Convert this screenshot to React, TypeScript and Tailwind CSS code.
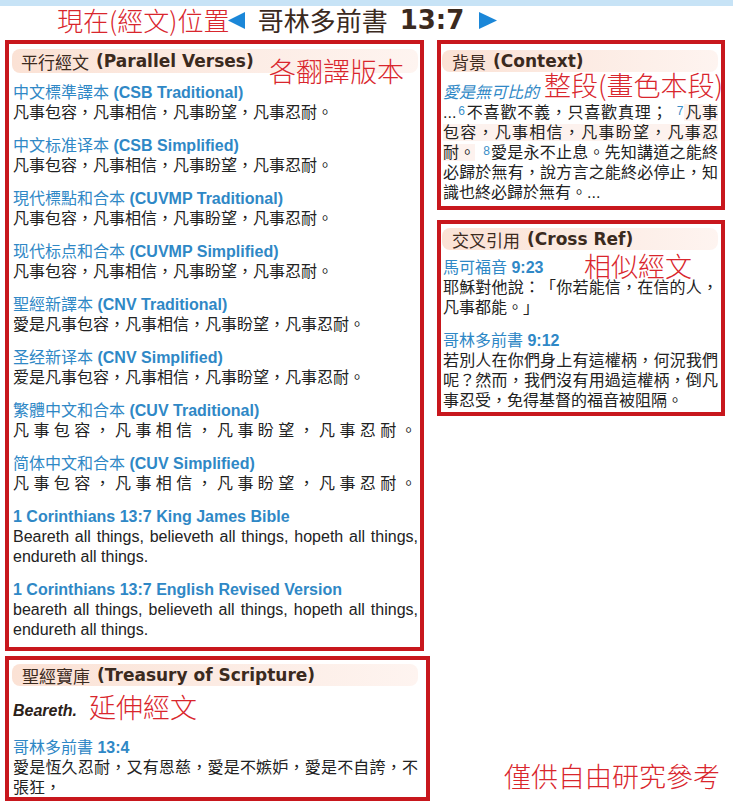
import React from "react";

const BLUE = "text-[#2f88c6]";

function SectionHeader({ zh, en, className }: { zh: string; en: string; className: string }) {
  return (
    <div
      className={`flex items-center rounded-lg bg-linear-to-r from-[#fbe2d5] via-[#fcebe3] to-[#fef4f0] text-[17px] leading-none text-[#3b2a1e] ${className}`}
    >
      <span className="font-['Noto_Sans_CJK_TC',sans-serif]">{zh}</span>
      <span className="ml-[7px] font-['DejaVu_Sans',sans-serif] font-bold">{en}</span>
    </div>
  );
}

function Sup({ n, className = "" }: { n: string; className?: string }) {
  return (
    <span className={`relative -top-[3px] text-[12px] leading-none text-[#3a8fc8] mr-[1px] ${className}`}>{n}</span>
  );
}

function Note({ text, className }: { text: string; className: string }) {
  return (
    <div
      className={`absolute whitespace-nowrap font-['Noto_Sans_CJK_TC',sans-serif] font-light leading-none text-[#d9262d] ${className}`}
    >
      {text}
    </div>
  );
}

const CN = "凡事包容，凡事相信，凡事盼望，凡事忍耐。";

const parallels: { zh?: string; en: string; text: string; spaced?: boolean }[] = [
  { zh: "中文標準譯本", en: "(CSB Traditional)", text: CN },
  { zh: "中文标准译本", en: "(CSB Simplified)", text: CN },
  { zh: "現代標點和合本", en: "(CUVMP Traditional)", text: CN },
  { zh: "现代标点和合本", en: "(CUVMP Simplified)", text: CN },
  { zh: "聖經新譯本", en: "(CNV Traditional)", text: "愛是凡事包容，凡事相信，凡事盼望，凡事忍耐。" },
  { zh: "圣经新译本", en: "(CNV Simplified)", text: "爱是凡事包容，凡事相信，凡事盼望，凡事忍耐。" },
  { zh: "繁體中文和合本", en: "(CUV Traditional)", text: CN, spaced: true },
  { zh: "简体中文和合本", en: "(CUV Simplified)", text: CN, spaced: true },
  {
    en: "1 Corinthians 13:7 King James Bible",
    text: "Beareth all things, believeth all things, hopeth all things, endureth all things.",
  },
  {
    en: "1 Corinthians 13:7 English Revised Version",
    text: "beareth all things, believeth all things, hopeth all things, endureth all things.",
  },
];

const crossRefs = [
  { zh: "馬可福音", ref: "9:23", text: "耶穌對他說：「你若能信，在信的人，凡事都能。」" },
  {
    zh: "哥林多前書",
    ref: "9:12",
    text: "若別人在你們身上有這權柄，何況我們呢？然而，我們沒有用過這權柄，倒凡事忍受，免得基督的福音被阻隔。",
  },
];

function RefTitle({ zh, en }: { zh?: string; en: string }) {
  return (
    <div className={`text-[16px] leading-[20px] whitespace-nowrap ${BLUE}`}>
      {zh ? <span className="font-normal">{zh} </span> : null}
      <span className="font-bold">{en}</span>
    </div>
  );
}

export default function App() {
  return (
    <div
      lang="zh-Hant"
      className="relative h-[806px] w-[733px] overflow-hidden bg-white font-['Liberation_Sans','Noto_Sans_CJK_TC',sans-serif] text-[#222] [text-spacing-trim:space-all]"
    >
      <div className="h-[6px] bg-[#c7e3f6]" />

      {/* Title row */}
      <div className="flex h-[28px] items-center justify-center pr-[8px]">
        <svg width="17" height="17" viewBox="0 0 17 17">
          <polygon points="17,0 17,17 0,8.5" fill="#1b87d8" />
        </svg>
        <span className="ml-[13px] font-['Noto_Sans_CJK_TC',sans-serif] text-[26px] leading-none text-[#3b2a1e]">
          哥林多前書
        </span>
        <span className="ml-[12px] font-['DejaVu_Sans',sans-serif] text-[26px] font-bold leading-none text-[#3b2a1e]">
          13:7
        </span>
        <svg className="ml-[15px]" width="18" height="17" viewBox="0 0 18 17">
          <polygon points="0,0 18,8.5 0,17" fill="#1b87d8" />
        </svg>
      </div>

      <div className="mt-[6px] flex pl-[5px]">
        {/* Left column */}
        <div className="flex w-[425px] flex-col">
          <div className="h-[611px] w-[419px] border-[4px] border-[#c8171d]">
            <SectionHeader zh="平行經文" en="(Parallel Verses)" className="ml-[3px] mr-[2px] mt-[5px] h-[24px] pl-[9px]" />
            <div className="mt-[10px] flex flex-col gap-[13px] pl-[4px] pr-[2px]">
              {parallels.map((p, i) => (
                <div key={i}>
                  <RefTitle zh={p.zh} en={p.en} />
                  <div
                    className={`text-justify text-[16px] leading-[20px] ${p.spaced ? "tracking-[4.4px] whitespace-nowrap" : ""}`}
                  >
                    {p.text}
                  </div>
                </div>
              ))}
            </div>
          </div>

          <div className="mt-[5px] h-[145px] w-[425px] border-[4px] border-[#c8171d]">
            <SectionHeader
              zh="聖經寶庫"
              en="(Treasury of Scripture)"
              className="ml-[3px] mr-[8px] mt-[4px] h-[22px] pl-[10px]"
            />
            <div className="mt-[15px] pl-[4px] text-[16px] font-bold italic leading-[20px] text-[#2b2118]">Beareth.</div>
            <div className="mt-[17px] pl-[4px] pr-[8px]">
              <RefTitle zh="哥林多前書" en="13:4" />
              <div className="text-justify text-[16px] leading-[20px]">
                愛是恆久忍耐，又有恩慈，愛是不嫉妒，愛是不自誇，不張狂，
              </div>
            </div>
          </div>
        </div>

        {/* Right column */}
        <div className="ml-[7px] flex w-[288px] flex-col">
          <div className="h-[170px] border-[4px] border-[#c8171d]">
            <SectionHeader zh="背景" en="(Context)" className="ml-[1px] mr-[3px] mt-[6px] h-[22px] pl-[10px]" />
            <div className={`mt-[11px] pl-[2px] text-[16px] italic leading-[20px] ${BLUE}`}>愛是無可比的</div>
            <p className="pl-[2px] pr-[3px] text-justify text-[16px] leading-[20px]">
              ...<Sup n="6" className="ml-[2px]" />不喜歡不義，只喜歡真理； <Sup n="7" className="ml-[4px]" />
              <span className="bg-[#fdf2ee]">凡事包容，凡事相信，凡事盼望，凡事忍耐。</span> <Sup n="8" className="ml-[3px]" />
              愛是永不止息。先知講道之能終必歸於無有，說方言之能終必停止，知識也終必歸於無有。...
            </p>
          </div>

          <div className="mt-[10px] h-[196px] border-[4px] border-[#c8171d]">
            <SectionHeader zh="交叉引用" en="(Cross Ref)" className="ml-[1px] mr-[3px] mt-[4px] h-[22px] pl-[10px]" />
            <div className="mt-[8px] flex flex-col gap-[13px] pl-[2px] pr-[3px]">
              {crossRefs.map((c, i) => (
                <div key={i}>
                  <RefTitle zh={c.zh} en={c.ref} />
                  <div className="text-justify text-[16px] leading-[20px]">{c.text}</div>
                </div>
              ))}
            </div>
          </div>
        </div>
      </div>

      {/* Annotations */}
      <Note text="現在(經文)位置" className="left-[57px] top-[7px] text-[26px]" />
      <Note text="各翻譯版本" className="left-[269px] top-[57px] text-[27px]" />
      <Note text="整段(畫色本段)" className="left-[544px] top-[71px] text-[27px]" />
      <Note text="相似經文" className="left-[584px] top-[252px] text-[27px]" />
      <Note text="延伸經文" className="left-[89px] top-[693px] text-[27px]" />
      <Note text="僅供自由研究參考" className="left-[504px] top-[762px] text-[27px]" />
    </div>
  );
}
